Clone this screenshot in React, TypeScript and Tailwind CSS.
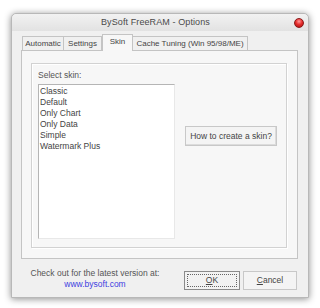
import React from "react";

const font = { fontFamily: '"Liberation Sans", Arial, sans-serif' };

export default function App() {
  const skins = ["Classic", "Default", "Only Chart", "Only Data", "Simple", "Watermark Plus"];
  return (
    <div className="w-[320px] h-[308px] bg-white pt-[13px] pl-[11px]" style={font}>
      <div className="w-[298px] h-[285px] flex flex-col bg-[#f0f0f0] rounded-t-[5px] border border-[#b8b8b8] shadow-[0_1px_7px_rgba(0,0,0,0.45)]">
        {/* Title bar */}
        <div className="h-[17px] flex items-center bg-gradient-to-b from-[#f2f2f2] to-[#e2e2e2] rounded-t-[5px]">
          <div className="flex-1 pl-[89px] text-[9px] text-[#4a4a4a] leading-none tracking-[0.1px]">BySoft FreeRAM - Options</div>
          <div className="w-[10px] h-[10px] mr-[4px] mt-[1px] rounded-full border border-[#8a1a1a] bg-[radial-gradient(circle_at_50%_30%,#ff9a9a_0%,#e83030_45%,#a80c0c_100%)]" />
        </div>
        {/* Body */}
        <div className="flex flex-col pl-[9px] pr-[11px]">
          <div className="h-[16px] mt-[3px] flex items-end text-[8px] text-[#444] leading-none">
            <div className="ml-[1px] w-[42px] h-[14px] border border-b-0 border-[#c4c4c4] bg-[#f0f0f0] flex items-center justify-center">Automatic</div>
            <div className="w-[38px] h-[14px] border border-b-0 border-l-0 border-[#c4c4c4] bg-[#f0f0f0] flex items-center justify-center">Settings</div>
            <div className="w-[31px] h-[17px] -mb-[1px] border border-b-0 border-[#c4c4c4] bg-[#f7f7f7] flex items-start pt-[3px] justify-center relative z-10">Skin</div>
            <div className="w-[115px] h-[14px] border border-b-0 border-l-0 border-[#c4c4c4] bg-[#f0f0f0] flex items-center justify-center">Cache Tuning (Win 95/98/ME)</div>
          </div>
          <div className="w-[277px] h-[209px] border border-[#c4c4c4] bg-[#f7f7f7] pt-[12px] pl-[9px]">
            <div className="w-[256px] h-[185px] border border-[#d2d2d2] shadow-[inset_1px_1px_0_#ffffff,1px_1px_0_#ffffff] flex">
              <div className="flex flex-col pl-[6px]">
                <div className="text-[8.5px] text-[#555] leading-none mt-[7px]">Select skin:</div>
                <div className="mt-[4px] w-[137px] h-[155px] bg-white border border-[#b5b5b5] border-r-[#e8e8e8] border-b-[#e8e8e8] pt-[1px] pl-[1px]">
                  {skins.map((s) => (
                    <div key={s} className="text-[8.5px] leading-[11px] text-[#444]">{s}</div>
                  ))}
                </div>
              </div>
              <div className="ml-[10px] mt-[62px]">
                <div className="w-[92px] h-[20px] border border-[#c8c8c8] bg-[#f4f4f4] flex items-center justify-center text-[8.5px] text-[#444] leading-none shadow-[inset_-1px_-1px_0_#dcdcdc]">How to create a skin?</div>
              </div>
            </div>
          </div>
          {/* Bottom */}
          <div className="flex mt-[12px]">
            <div className="w-[146px] -mt-[3px] flex flex-col items-center pl-[2px] text-[8.5px] leading-[11px]">
              <div className="text-[#555]">Check out for the latest version at:</div>
              <div className="text-[#4040e0]">www.bysoft.com</div>
            </div>
            <div className="ml-[17px] w-[56px] h-[19px] border border-[#8a8a8a] bg-[#f2f2f2] p-[2px]">
              <div className="w-full h-full border border-dotted border-[#666] flex items-center justify-center text-[8.5px] text-[#444] leading-none"><span className="underline">O</span>K</div>
            </div>
            <div className="ml-[3px] w-[54px] h-[19px] border border-[#c8c8c8] bg-[#f4f4f4] flex items-center justify-center text-[8.5px] text-[#444] leading-none"><span className="underline">C</span>ancel</div>
          </div>
        </div>
      </div>
    </div>
  );
}
